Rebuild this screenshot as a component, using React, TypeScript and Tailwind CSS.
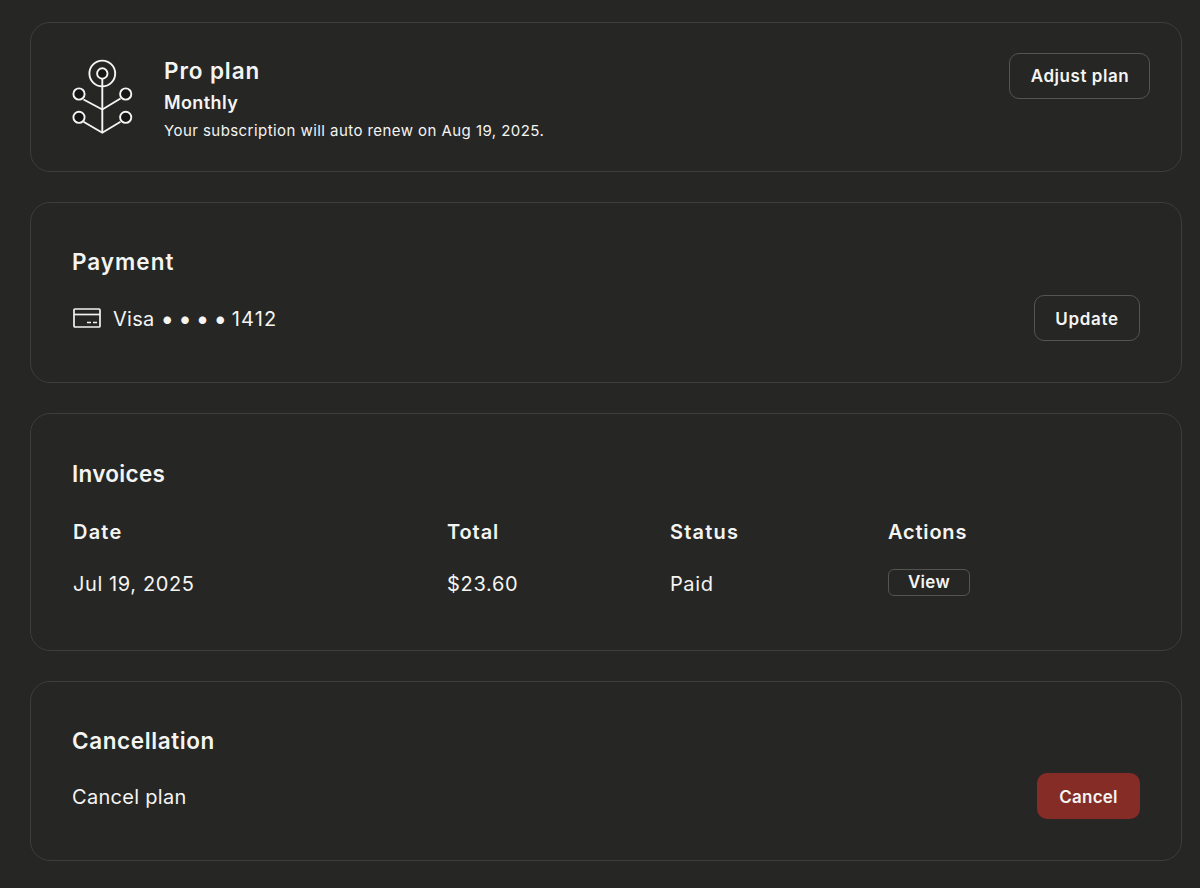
import React from 'react';

const PlanIcon = () => (
  <svg width="64" height="80" viewBox="0 0 64 80" fill="none" stroke="#f5f5f5" strokeWidth="1.9" className="block shrink-0">
    <circle cx="32.3" cy="15.5" r="12.9" />
    <circle cx="32.3" cy="15.5" r="5.2" fill="#151515" />
    <path d="M32.3 20.7V74.7" />
    <path d="M13.5 41.5L32.3 51.5L50.5 40.5" />
    <path d="M13.5 63.7L32.3 74.7L50.5 63.7" />
    <circle cx="9" cy="36" r="5.6" fill="#151515" />
    <circle cx="55.7" cy="36" r="5.6" fill="#151515" />
    <circle cx="9" cy="59.3" r="5.6" fill="#151515" />
    <circle cx="55.7" cy="59.3" r="5.6" fill="#151515" />
  </svg>
);

const CardIcon = () => (
  <svg width="28" height="20" viewBox="0 0 28 20" fill="none" stroke="#f2f2f2" strokeWidth="1.7" className="block shrink-0">
    <rect x="1" y="1" width="26" height="18" rx="1" />
    <path d="M1 6.5H27" />
    <path d="M14 14.5H18M20 14.5H24" />
  </svg>
);

const cardClass = 'border border-[#3d3d3b] rounded-[20px] bg-[#262625]';

export default function App() {
  return (
    <div
      className="min-h-[888px] bg-[#262625] pl-[30px] pr-[18px] pt-[22px] flex flex-col gap-[30px] text-[#f4f4f2]"
      style={{ fontFamily: 'Inter, "Liberation Sans", sans-serif' }}
    >
      {/* Plan */}
      <section className={`${cardClass} h-[150px] pl-[41px] pr-[31px] pt-[30px] flex items-start justify-between`}>
        <div className="flex">
          <div className="-ml-[2px] mt-[5px]"><PlanIcon /></div>
          <div className="ml-[30px] pt-[3px]">
            <h2 className="text-[22.5px] leading-[30px] font-semibold tracking-[0.9px]">Pro plan</h2>
            <div className="text-[18px] leading-[24px] mt-[5px] font-semibold tracking-[0.4px]">Monthly</div>
            <p className="text-[15px] leading-[20px] mt-[6px] tracking-[0.44px]">Your subscription will auto renew on Aug 19, 2025.</p>
          </div>
        </div>
        <button className="w-[141px] h-[46px] pt-[2px] pl-[1px] border border-[#545452] rounded-[10px] text-[17px] font-semibold tracking-[0.55px]">Adjust plan</button>
      </section>

      {/* Payment */}
      <section className={`${cardClass} h-[181px] pl-[41px] pr-[41px] pt-[44px]`}>
        <h2 className="text-[22.5px] leading-[30px] font-semibold tracking-[1px]">Payment</h2>
        <div className="flex items-center justify-between mt-[18px]">
          <div className="flex items-center pl-[1px]">
            <CardIcon />
            <span className="ml-[12px] pt-[1px] text-[20px] leading-[26px] tracking-[0.3px]">
              Visa <span className="text-[24px] leading-none align-[-1px] tracking-[-1.3px]">• • • •</span> <span className="tracking-[1.2px]">1412</span>
            </span>
          </div>
          <button className="w-[106px] h-[46px] pt-[3px] border border-[#545452] rounded-[10px] text-[17px] font-semibold tracking-[0.7px]">Update</button>
        </div>
      </section>

      {/* Invoices */}
      <section className={`${cardClass} h-[238px] pl-[41px] pr-[41px] pt-[45px]`}>
        <h2 className="text-[22.5px] leading-[30px] font-semibold tracking-[0.3px]">Invoices</h2>
        <div className="grid grid-cols-[374px_223px_218px_1fr] pl-[1px] mt-[30px] text-[20px] leading-[26px]">
          <div className="font-semibold tracking-[1.2px]">Date</div>
          <div className="font-semibold tracking-[0.9px]">Total</div>
          <div className="font-semibold tracking-[1.2px]">Status</div>
          <div className="font-semibold tracking-[0.8px]">Actions</div>
          <div className="mt-[26px] tracking-[0.6px]">Jul 19, 2025</div>
          <div className="mt-[26px] tracking-[0.7px]">$23.60</div>
          <div className="mt-[26px] tracking-[0.6px]">Paid</div>
          <div className="mt-[24px]">
            <button className="block w-[82px] h-[27px] border border-[#545452] rounded-[6px] text-[17px] leading-[25px] font-semibold tracking-[0.3px]">View</button>
          </div>
        </div>
      </section>

      {/* Cancellation */}
      <section className={`${cardClass} h-[180px] pl-[41px] pr-[41px] pt-[44px]`}>
        <h2 className="text-[22.5px] leading-[30px] font-semibold tracking-[0.6px]">Cancellation</h2>
        <div className="flex items-center justify-between mt-[17px]">
          <span className="pt-[2px] text-[20px] leading-[26px] tracking-[0.3px]">Cancel plan</span>
          <button className="w-[103px] h-[46px] pt-[3px] bg-[#852c27] rounded-[10px] text-[17px] font-semibold tracking-[0.2px]">Cancel</button>
        </div>
      </section>
    </div>
  );
}
